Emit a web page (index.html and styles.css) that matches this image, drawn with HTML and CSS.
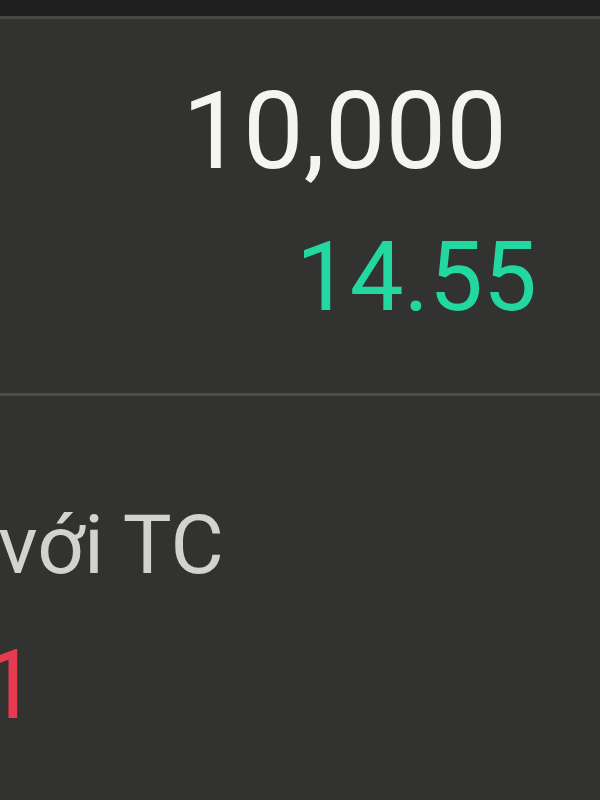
FILE: index.html
```html
<!DOCTYPE html>
<html lang="vi">

<head>
  <meta charset="UTF-8">
  <meta name="viewport" content="width=device-width, initial-scale=1.0">
  <title>Giá</title>
  <link rel="stylesheet" href="styles.css">
</head>

<body>
  <div class="topbar"></div>

  <section class="quote">
    <div class="volume">10,000</div>
    <div class="price up">14.55</div>
  </section>

  <section class="compare">
    <div class="label">với TC</div>
    <div class="change down">1</div>
  </section>
</body>

</html>
```

FILE: styles.css
```css
* {
  margin: 0;
  padding: 0;
}

body {
  width: 600px;
  height: 800px;
  overflow: hidden;
  background: #323230;
  font-family: Roboto, "Noto Sans", sans-serif;
}

.topbar {
  height: 16px;
  background: #1f1f1f;
  border-bottom: 3px solid #474746;
}

.quote {
  height: 316px;
  padding-top: 58px;
  border-bottom: 3px solid #4b4b4a;
  text-align: right;
}

.volume {
  margin-right: 93px;
  font-size: 108px;
  line-height: 1;
  color: #f4f4f2;
}

.price {
  margin-top: 44px;
  margin-right: 63px;
  font-size: 96px;
  line-height: 1;
}

.up {
  color: #22d8a0;
}

.down {
  color: #e83a50;
}

.compare {
  padding-top: 108px;
}

.label {
  margin-left: -2px;
  font-size: 82px;
  line-height: 1;
  color: #d2d2d0;
}

.change {
  margin-top: 51px;
  margin-left: -17px;
  font-size: 96px;
  line-height: 1;
}
```
